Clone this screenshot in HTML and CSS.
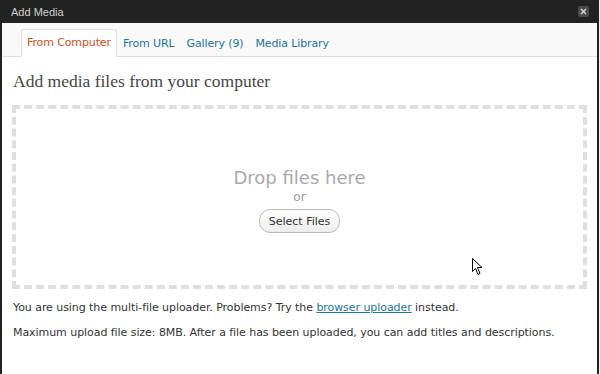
FILE: index.html
```html
<!DOCTYPE html>
<html lang="en">
<head>
    <meta charset="UTF-8">
    <title>Add Media</title>
    <link rel="stylesheet" href="styles.css">
</head>
<body>

    <div class="window">
        <!-- Title bar -->
        <div class="titlebar">
            <span class="title">Add Media</span>
            <span class="close">
                <svg width="11" height="11" viewBox="0 0 11 11">
                    <path d="M3 3 L8 8 M8 3 L3 8" stroke="#cfcfcf" stroke-width="1.6"/>
                </svg>
            </span>
        </div>

        <!-- Tabs -->
        <ul class="tabs">
            <li class="tab current">From Computer</li>
            <li class="tab">From URL</li>
            <li class="tab">Gallery (9)</li>
            <li class="tab">Media Library</li>
        </ul>

        <div class="content">
            <h3 class="heading">Add media files from your computer</h3>

            <div class="dropzone">
                <p class="drop-text">Drop files here</p>
                <p class="drop-or">or</p>
                <button class="select-button">Select Files</button>
                <svg class="cursor" width="12" height="18" viewBox="0 0 12 18">
                    <path d="M0.5 0.5 L0.5 13.5 L3.5 10.5 L6 16.5 L8 15.5 L5.5 9.5 L10 9.5 Z" fill="#fff" stroke="#000" stroke-width="1"/>
                </svg>
            </div>

            <p class="note">You are using the multi-file uploader. Problems? Try the <a href="#">browser uploader</a> instead.</p>
            <p class="note">Maximum upload file size: 8MB. After a file has been uploaded, you can add titles and descriptions.</p>
        </div>
    </div>

</body>
</html>
```

FILE: styles.css
```css
body {
    margin: 0;
    padding: 0;
    background: #f1f1f1;
    font-family: "DejaVu Sans", sans-serif;
}

.window {
    width: 595px;
    height: 374px;
    background: #ffffff;
    border-left: 2px solid #222222;
    border-right: 2px solid #222222;
    overflow: hidden;
}

/* Title bar */
.titlebar {
    height: 23px;
    background: #222222;
    display: flex;
    align-items: center;
    justify-content: space-between;
    padding: 0 10px 0 11px;
    margin-left: -2px;
    margin-right: -2px;
}

.title {
    font-family: "Liberation Sans", Arial, sans-serif;
    color: #cfcfcf;
    font-size: 11px;
}

.close {
    width: 11px;
    height: 11px;
    background: #4a4a4a;
    border-radius: 2px;
    display: flex;
}

/* Tabs */
.tabs {
    list-style: none;
    margin: 0;
    padding: 6px 0 0 19px;
    height: 27px;
    background: #f9f9f9;
    border-bottom: 1px solid #dfdfdf;
    display: flex;
    align-items: flex-end;
}

.tab {
    font-size: 11px;
    letter-spacing: -0.12px;
    color: #21759b;
    padding: 0 5px;
    height: 26px;
    line-height: 26px;
    border: 1px solid transparent;
    border-bottom: none;
    margin-bottom: -1px;
}

.tab.current {
    color: #d54e21;
    background: #ffffff;
    border-color: #dfdfdf;
    border-radius: 3px 3px 0 0;
    height: 27px;
}

/* Content */
.content {
    padding: 0 10px 0 10px;
}

.heading {
    font-family: "Liberation Serif", serif;
    font-weight: normal;
    font-size: 17.5px;
    line-height: 20px;
    color: #464646;
    margin: 14px 0 14px 1px;
}

.dropzone {
    position: relative;
    height: 176px;
    border: 4px dashed #dfdfdf;
    display: flex;
    flex-direction: column;
    align-items: center;
}

.drop-text {
    font-size: 18px;
    line-height: 21px;
    color: #aaaaaa;
    margin: 58px 0 0;
}

.drop-or {
    font-size: 12px;
    line-height: 14px;
    color: #999999;
    margin: 2px 0 5px;
}

.select-button {
    font-family: "DejaVu Sans", sans-serif;
    font-size: 11px;
    color: #333333;
    height: 24px;
    padding: 0 9px;
    border: 1px solid #bbbbbb;
    border-radius: 11px;
    background: linear-gradient(to bottom, #ffffff, #ededed);
}

.cursor {
    position: absolute;
    left: 456px;
    top: 149px;
}

.note {
    font-size: 11px;
    letter-spacing: -0.06px;
    color: #333333;
    margin: 12px 1px 0;
}

.note a {
    color: #21759b;
}
```
